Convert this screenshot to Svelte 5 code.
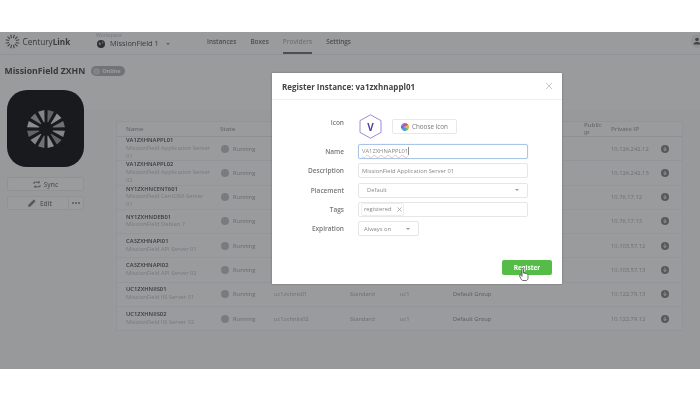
<script>
	const rows = [
		{ name: 'VA1ZXHNAPPL01', desc: 'MissionField Application Server 01', ip: '10.126.242.12' },
		{ name: 'VA1ZXHNAPPL02', desc: 'MissionField Application Server 02', ip: '10.126.242.13' },
		{ name: 'NY1ZXHNCENT601', desc: 'MissionField CentOS6 Server 01', ip: '10.76.17.12' },
		{ name: 'NY1ZXHNDEB01', desc: 'MissionField Debian 7', ip: '10.76.17.13' },
		{ name: 'CA3ZXHNAPI01', desc: 'MissionField API Server 01', ip: '10.103.57.12' },
		{ name: 'CA3ZXHNAPI02', desc: 'MissionField API Server 02', ip: '10.103.57.13' },
		{ name: 'UC1ZXHNIIS01', desc: 'MissionField IIS Server 01', host: 'uc1zxhnis01', ip: '10.122.79.13' },
		{ name: 'UC1ZXHNIIS02', desc: 'MissionField IIS Server 02', host: 'uc1zxhniis02', ip: '10.122.79.12' }
	];

	const polar = (r, a) => {
		const t = (a * Math.PI) / 180;
		return `${(r * Math.cos(t)).toFixed(2)},${(r * Math.sin(t)).toFixed(2)}`;
	};

	const shades = ['#d8d8d8', '#9c9c9c', '#e6e6e6', '#b4b4b4'];
	const spokes = Array.from({ length: 12 }, (_, i) => {
		const a = i * 30 + 15;
		return {
			points: [polar(7, a - 3.5), polar(19, a - 10), polar(19, a + 10), polar(7, a + 3.5)].join(' '),
			fill: shades[i % shades.length]
		};
	});
	const marks = Array.from({ length: 12 }, (_, i) => {
		const a = i * 30 + 15;
		return { from: polar(3.5, a).split(','), to: polar(7, a).split(',') };
	});
</script>

<div class="page">
	<div class="screen">
		<header class="topbar">
			<div class="brand">
				<svg width="15" height="15" viewBox="-7.5 -7.5 15 15" aria-hidden="true">
					{#each marks as m}
						<line x1={m.from[0]} y1={m.from[1]} x2={m.to[0]} y2={m.to[1]} stroke="#666" stroke-width="1.1" />
					{/each}
				</svg>
				<span class="brand-name">Century<b>Link</b></span>
			</div>
			<div class="workspace">
				<span class="ws-label">Workspace</span>
				<span class="ws-value">
					<svg width="8" height="8" viewBox="0 0 8 8" aria-hidden="true">
						<circle cx="4" cy="4" r="4" fill="#444" />
						<path d="M1.500 2.500h2l.5 2-1.500 1zM5 1l1.500 1.500-1 1.500z" fill="#bbb" />
					</svg>
					MissionField 1
					<i class="caret ws-caret"></i>
				</span>
			</div>
			<nav class="nav">
				<span>Instances</span>
				<span>Boxes</span>
				<span class="active">Providers</span>
				<span>Settings</span>
			</nav>
			<div class="user">
				<svg width="8" height="8" viewBox="0 0 8 8" aria-hidden="true">
					<circle cx="4" cy="2.500" r="1.800" fill="#666" />
					<path d="M0.500 7.500c0-2 2-2.500 3.500-2.500s3.500.5 3.500 2.500z" fill="#666" />
				</svg>
			</div>
		</header>

		<div class="title-row">
			<h1>MissionField ZXHN</h1>
			<span class="pill"><i></i>Online</span>
		</div>

		<main class="content">
			<aside class="side">
				<div class="logo">
					<svg width="40" height="40" viewBox="-20 -20 40 40" aria-hidden="true">
						{#each spokes as s}
							<polygon points={s.points} fill={s.fill} />
						{/each}
					</svg>
				</div>
				<button class="side-btn sync">
					<svg width="8" height="7" viewBox="0 0 8 7" aria-hidden="true">
						<path d="M1 3V1.200h5.500M5.200 0l1.500 1.200-1.500 1.200M7 4v1.800H1.500M2.800 7L1.300 5.800l1.500-1.200" fill="none" stroke="#777" stroke-width=".9" />
					</svg>
					Sync
				</button>
				<div class="edit-row">
					<button class="side-btn edit">
						<svg width="8" height="8" viewBox="0 0 8 8" aria-hidden="true">
							<path d="M0 8l.6-2.400L5.800.4l1.800 1.800L2.400 7.400z" fill="#888" />
						</svg>
						Edit
					</button>
					<button class="side-btn more" aria-label="More"><i></i><i></i><i></i></button>
				</div>
			</aside>

			<section class="table">
				<div class="row head">
					<span class="col-name">Name</span>
					<span>State</span>
					<span></span><span></span><span></span><span></span>
					<span class="public">Public<br />IP</span>
					<span>Private IP</span>
					<span></span>
				</div>
				{#each rows as r}
					<div class="row">
						<div class="col-name">
							<div class="inst">{r.name}</div>
							<div class="desc">{r.desc}</div>
						</div>
						<div class="state"><i class="dot"></i>Running</div>
						<span>{r.host ?? ''}</span>
						<span>{r.host ? 'Standard' : ''}</span>
						<span>{r.host ? 'uc1' : ''}</span>
						<span class="group">{r.host ? 'Default Group' : ''}</span>
						<span></span>
						<span>{r.ip}</span>
						<span class="plus">
							<svg width="8" height="8" viewBox="0 0 8 8" aria-hidden="true">
								<circle cx="4" cy="4" r="4" fill="#8a8a8a" />
								<path d="M4 1.800v3.600M2.400 4l1.600 1.600L5.600 4" fill="none" stroke="#eee" stroke-width="1" />
							</svg>
						</span>
					</div>
				{/each}
			</section>
		</main>

		<div class="scrim"></div>

		<div class="modal">
			<div class="modal-head">
				<h2>Register Instance: va1zxhnappl01</h2>
				<svg width="8" height="8" viewBox="0 0 8 8" aria-hidden="true">
					<path d="M.8.8l6.400 6.400M7.200.8L.8 7.200" stroke="#bbb" stroke-width=".8" />
				</svg>
			</div>
			<div class="form">
				<span class="label icon-label">Icon</span>
				<div class="icon-field">
					<div class="hex">
						<svg width="25" height="25" viewBox="0 0 25 25" aria-hidden="true">
							<polygon points="12.500,.8 23,6.600 23,18.400 12.500,24.200 2,18.400 2,6.600" fill="#fff" stroke="#8a6cc4" stroke-width=".8" />
						</svg>
						<span>V</span>
					</div>
					<button class="choose">
						<svg width="8" height="8" viewBox="-4 -4 8 8" aria-hidden="true">
							<path d="M0 0L0-4A4 4 0 0 1 3.460-2z" fill="#e2574c" />
							<path d="M0 0L3.460-2A4 4 0 0 1 3.460 2z" fill="#f0b040" />
							<path d="M0 0L3.460 2A4 4 0 0 1 0 4z" fill="#5bb974" />
							<path d="M0 0L0 4A4 4 0 0 1-3.460 2z" fill="#3d9be0" />
							<path d="M0 0L-3.460 2A4 4 0 0 1-3.460-2z" fill="#5a6fd0" />
							<path d="M0 0L-3.460-2A4 4 0 0 1 0-4z" fill="#a85cc0" />
						</svg>
						Choose Icon
					</button>
				</div>

				<span class="label">Name</span>
				<div class="field focus"><span class="squiggle">VA1ZXHNAPPL01</span><i class="text-caret"></i></div>

				<span class="label">Description</span>
				<div class="field">MissionField Application Server 01</div>

				<span class="label">Placement</span>
				<div class="field select"><span>Default</span><i class="caret"></i></div>

				<span class="label">Tags</span>
				<div class="field tags"><span class="tag">registered<svg width="5" height="5" viewBox="0 0 5 5" aria-hidden="true"><path d="M.4.4l4.200 4.200M4.600.4L.4 4.600" stroke="#888" stroke-width=".6" /></svg></span></div>

				<span class="label">Expiration</span>
				<div class="field select short"><span>Always on</span><i class="caret"></i></div>
			</div>
			<div class="modal-foot">
				<button class="register">Register</button>
				<svg class="hand" width="10" height="13" viewBox="0 0 10 13" aria-hidden="true">
					<path d="M3 1.200c0-1 1.500-1 1.500 0V5l3 .6c1 .2 1.500.8 1.500 1.800V10c0 1-.5 2-1.500 2.500H4c-1 0-1.500-.8-2-1.600L.6 8c-.5-1 .6-1.600 1.300-.8L3 8.400z" fill="#fff" stroke="#333" stroke-width=".7" />
				</svg>
			</div>
		</div>
	</div>
</div>

<style>
	:global(body) {
		margin: 0;
		background: #fff;
	}

	.page {
		width: 700px;
		height: 400px;
		padding-top: 32px;
		box-sizing: border-box;
		overflow: hidden;
		font-family: 'Open Sans', sans-serif;
		filter: blur(0.5px);
	}

	.screen {
		position: relative;
		height: 337px;
		background: #fbfbfc;
		color: #777;
		overflow: hidden;
	}

	button {
		font-family: inherit;
		margin: 0;
		padding: 0;
	}

	/* Top bar */
	.topbar {
		display: flex;
		align-items: center;
		height: 23px;
		padding-bottom: 4px;
		box-sizing: border-box;
		border-bottom: 1px solid #ededee;
	}

	.brand {
		display: flex;
		align-items: center;
		gap: 2.500px;
		width: 91px;
		padding-left: 5px;
		box-sizing: border-box;
	}

	.brand-name {
		font-size: 8.200px;
		color: #555;
	}

	.brand-name b {
		font-weight: 700;
	}

	.workspace {
		display: flex;
		flex-direction: column;
		width: 111px;
		margin: -2px 0 0 5px;
		line-height: 7px;
	}

	.ws-label {
		font-size: 5px;
		color: #c4c4c4;
	}

	.ws-value {
		display: flex;
		align-items: center;
		gap: 5px;
		font-size: 7.400px;
		color: #555;
		line-height: 9px;
	}

	.ws-value svg {
		margin-left: 1px;
	}

	.ws-caret {
		margin-left: 2px;
	}

	.caret {
		width: 0;
		height: 0;
		border-left: 2.500px solid transparent;
		border-right: 2.500px solid transparent;
		border-top: 2.500px solid #999;
	}

	.nav {
		display: flex;
		gap: 14px;
		align-self: stretch;
		margin-bottom: -4px;
		font-size: 6.400px;
		font-weight: 600;
		color: #777;
	}

	.nav span {
		display: flex;
		align-items: center;
		padding: 1px 0 3px;
		box-sizing: border-box;
		border-bottom: 2px solid transparent;
	}

	.nav .active {
		color: #b8b8b8;
		border-bottom-color: #777;
	}

	.user {
		margin-left: auto;
		margin-right: -5px;
		width: 14px;
		height: 14px;
		border-radius: 50%;
		background: #eee;
		display: flex;
		align-items: center;
		justify-content: center;
		padding-right: 2px;
		box-sizing: border-box;
	}

	/* Title */
	.title-row {
		display: flex;
		align-items: center;
		gap: 6px;
		height: 30px;
		padding: 2px 0 0 4.500px;
		box-sizing: border-box;
	}

	h1 {
		margin: 0;
		font-size: 8.700px;
		font-weight: 700;
		color: #555;
	}

	.pill {
		display: flex;
		align-items: center;
		gap: 2px;
		height: 10px;
		width: 34px;
		box-sizing: border-box;
		padding: 0 2px;
		border-radius: 5px;
		background: #b5b7ba;
		color: #fff;
		font-size: 5.500px;
		font-weight: 700;
	}

	.pill i {
		width: 7px;
		height: 7px;
		border-radius: 50%;
		background: #cfd1d4;
	}

	/* Body */
	.content {
		display: flex;
		height: 284px;
		padding-top: 5px;
		box-sizing: border-box;
		background: linear-gradient(#fbfbfc 25px, #f8f8f9 25px);
	}

	.side {
		width: 116px;
		padding-left: 7px;
		box-sizing: border-box;
		display: flex;
		flex-direction: column;
		align-items: flex-start;
	}

	.logo {
		width: 77px;
		height: 77px;
		border-radius: 20px;
		background: #1c1e22;
		display: flex;
		align-items: center;
		justify-content: center;
		margin-bottom: 10px;
	}

	.side-btn {
		height: 14px;
		background: #fcfcfc;
		border: 1px solid #ececec;
		border-radius: 2px;
		box-sizing: border-box;
		color: #888;
		font-size: 6.500px;
		font-weight: 600;
		display: flex;
		align-items: center;
		justify-content: center;
		gap: 3px;
	}

	.sync {
		width: 77px;
		margin-bottom: 5px;
	}

	.edit-row {
		display: flex;
		width: 77px;
	}

	.edit {
		width: 61px;
		gap: 4px;
		padding-left: 4px;
		border-right: 0;
		border-radius: 2px 0 0 2px;
	}

	.more {
		width: 16px;
		gap: 1px;
		border-radius: 0 2px 2px 0;
	}

	.more i {
		width: 2px;
		height: 2px;
		border-radius: 50%;
		background: #888;
	}

	/* Table */
	.table {
		margin-top: 31px;
		width: 567px;
		height: 210px;
		background: #fbfbfc;
		border: 1px solid #f0f0f1;
		box-sizing: border-box;
	}

	.row {
		display: grid;
		grid-template-columns: 103px 54px 76px 50px 53px 131px 27px 50px 22px;
		align-items: center;
		height: 24.250px;
		box-sizing: border-box;
		border-bottom: 1px solid #f2f2f3;
		font-size: 5.800px;
		color: #b0b0b0;
	}

	.row:last-child {
		border-bottom: 0;
	}

	.head {
		height: 15px;
		padding-bottom: 1px;
		border-bottom: 1px solid #e8e8e9;
		font-size: 6.100px;
		color: #aaa;
		font-weight: 600;
	}

	.public {
		line-height: 8px;
		margin: -2px 0;
	}

	.col-name {
		padding-left: 9px;
		padding-right: 9px;
	}

	.inst {
		font-weight: 600;
		color: #565656;
		line-height: 7.800px;
	}

	.desc {
		color: #c4c4c4;
		line-height: 7.800px;
	}

	.state {
		display: flex;
		align-items: center;
		gap: 4px;
		color: #aaa;
	}

	.dot {
		width: 8px;
		height: 8px;
		border-radius: 50%;
		background: #c4c5c8;
		margin-left: 1px;
	}

	.group {
		color: #909090;
	}

	.plus {
		display: flex;
	}

	/* Modal */
	.scrim {
		position: absolute;
		inset: 0;
		background: rgba(20, 22, 26, 0.42);
	}

	.modal {
		position: absolute;
		left: 272px;
		top: 41px;
		width: 290px;
		height: 211px;
		background: #fff;
		box-shadow: 0 0 2px rgba(0, 0, 0, 0.3);
	}

	.modal-head {
		display: flex;
		align-items: center;
		justify-content: space-between;
		height: 27px;
		padding: 0 9px 0 10px;
		border-bottom: 1px solid #eee;
		box-sizing: border-box;
	}

	h2 {
		margin: 0;
		font-size: 8px;
		font-weight: 700;
		color: #444;
	}

	.form {
		display: grid;
		grid-template-columns: 72px 170px;
		column-gap: 14px;
		row-gap: 4.300px;
		align-items: center;
		padding-top: 14px;
	}

	.label {
		text-align: right;
		font-size: 6.500px;
		color: #777;
		font-weight: 600;
	}

	.icon-label {
		align-self: start;
		margin-top: 4px;
	}

	.icon-field {
		display: flex;
		align-items: center;
		gap: 9px;
		margin-bottom: 0.700px;
	}

	.hex {
		position: relative;
		width: 25px;
		height: 25px;
	}

	.hex svg {
		display: block;
	}

	.hex span {
		position: absolute;
		inset: 0;
		display: flex;
		align-items: center;
		justify-content: center;
		color: #5a3fa0;
		font-size: 10px;
		font-weight: 700;
	}

	.choose {
		display: flex;
		align-items: center;
		justify-content: center;
		gap: 3px;
		width: 65px;
		height: 15px;
		background: #fff;
		border: 1px solid #e8e8e8;
		border-radius: 2px;
		font-size: 6.300px;
		color: #777;
	}

	.field {
		display: flex;
		align-items: center;
		height: 15px;
		box-sizing: border-box;
		padding: 0 3px;
		border: 1px solid #e6e6e6;
		border-radius: 2px;
		font-size: 5.800px;
		color: #888;
	}

	.focus {
		border-color: #a9c6e6;
		box-shadow: 0 0 1px #a9c6e6;
	}

	.squiggle {
		text-decoration: underline wavy #efc0c0 0.400px;
	}

	.text-caret {
		width: 1px;
		height: 8px;
		background: #888;
	}

	.select {
		justify-content: space-between;
		padding: 0 8px;
	}

	.short {
		width: 61px;
		padding: 0 8px 0 5px;
	}

	.tags {
		padding: 0 2px;
	}

	.tag {
		display: flex;
		align-items: center;
		gap: 5px;
		height: 11px;
		padding: 0 1px 0 2px;
		border: 1px solid #eee;
		border-radius: 2px;
	}

	.modal-foot {
		position: relative;
		display: flex;
		justify-content: flex-end;
		padding: 24px 10px 0 0;
	}

	.register {
		width: 50px;
		height: 15px;
		background: #55bd47;
		border: 0;
		border-radius: 2px;
		color: #fff;
		font-size: 6.500px;
		font-weight: 700;
	}

	.hand {
		position: absolute;
		left: 247px;
		top: 32px;
	}
</style>
